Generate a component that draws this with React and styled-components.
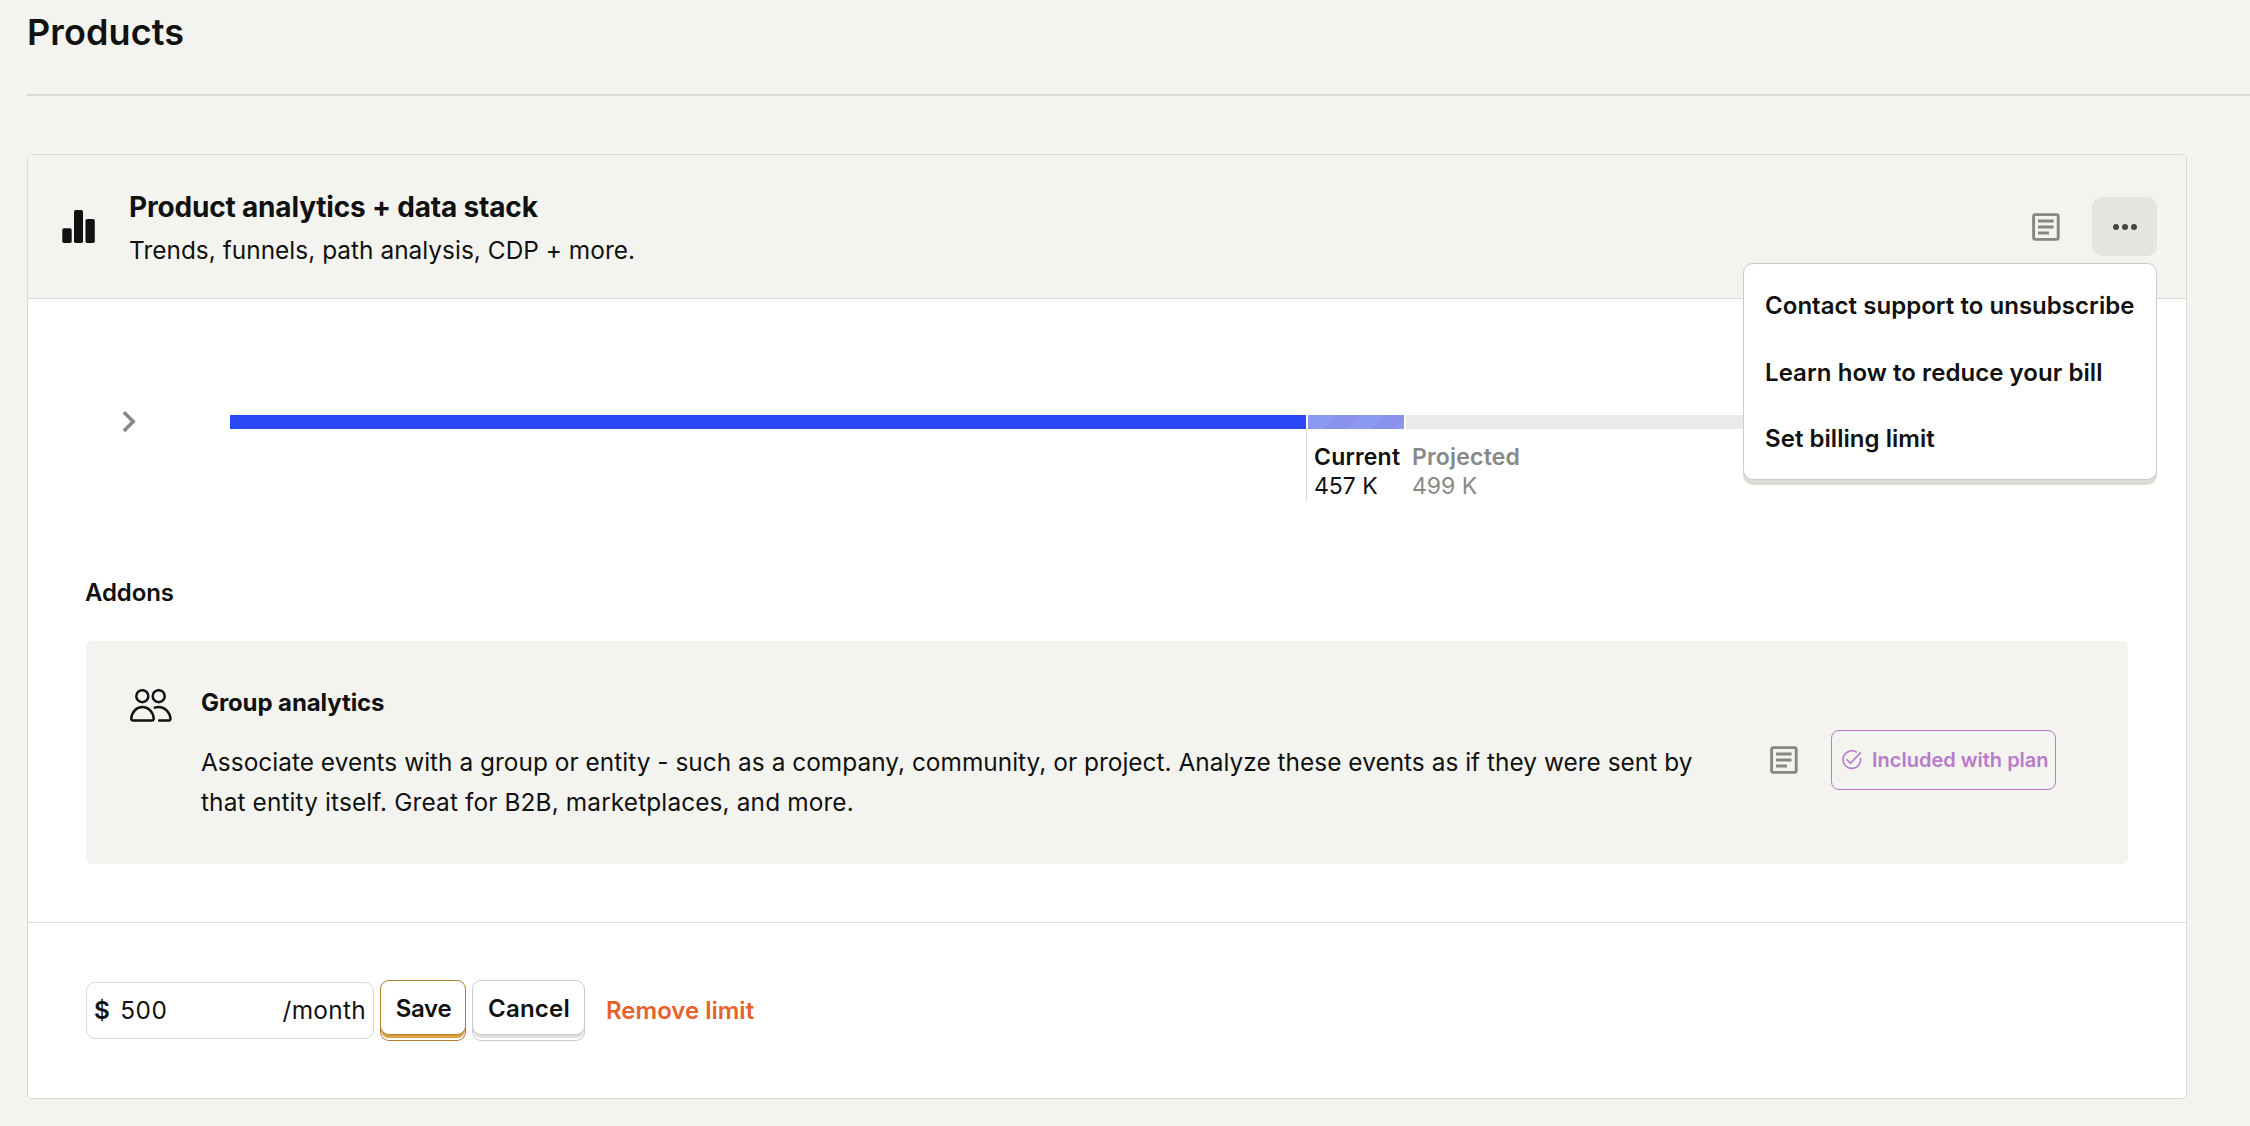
import React from "react";
import styled, { createGlobalStyle } from "styled-components";

const GlobalStyle = createGlobalStyle`
  *, *::before, *::after { box-sizing: border-box; }
  body {
    margin: 0;
    background: #f3f4ef;
    color: #111;
    font-family: Inter, "Liberation Sans", sans-serif;
    font-size: 24px;
    overflow: hidden;
  }
  h1, h2, h3, p { margin: 0; }
  button, input { font: inherit; color: inherit; }
  svg { display: block; flex-shrink: 0; }
`;

const Page = styled.main`
  height: 1126px;
  padding: 12px 0 0 27px;
`;

const PageTitle = styled.h1`
  font-size: 36px;
  line-height: 40px;
  font-weight: 600;
  letter-spacing: 0.1px;
`;

const Divider = styled.hr`
  height: 2px;
  margin: 42px 0 58px;
  border: 0;
  background: #dadbd2;
`;

const Card = styled.section`
  width: 2160px;
  border: 1px solid #dadbd2;
  border-radius: 5px;
  background: #fff;
`;

const CardHeader = styled.header`
  display: flex;
  align-items: center;
  height: 144px;
  padding: 0 29px 0 34px;
  border-bottom: 1px solid #dadbd2;
  background: #f3f4ef;
`;

const Heading = styled.div`
  display: flex;
  flex: 1;
  flex-direction: column;
  gap: 10px;
  margin-left: 34px;
  padding-top: 1px;
`;

const ProductTitle = styled.h2`
  font-size: 28px;
  line-height: 36px;
  font-weight: 700;
  letter-spacing: -0.18px;
`;

const ProductSummary = styled.p`
  font-size: 24.4px;
  line-height: 30px;
  letter-spacing: 0.03px;
`;

const MenuAnchor = styled.div`
  position: relative;
  margin-left: 32px;
`;

const MoreButton = styled.button`
  display: flex;
  align-items: center;
  justify-content: center;
  width: 65px;
  height: 59px;
  padding: 0;
  border: 0;
  border-radius: 10px;
  background: #e4e5df;
`;

const Menu = styled.div`
  position: absolute;
  z-index: 2;
  top: 66px;
  right: 0;
  width: 414px;
  padding: 9px 20px 6px 21px;
  border: 1px solid #cbcbcb;
  border-radius: 10px;
  background: #fff;
  box-shadow: 0 5px 0 #dadbd2;
`;

const MenuItem = styled.div`
  line-height: 66.5px;
  font-weight: 600;
  white-space: nowrap;
  letter-spacing: ${(p) => p.$tracking || 0}px;
`;

const CardBody = styled.div`
  padding: 112px 58px 58px;
`;

const Usage = styled.div`
  display: flex;
  align-items: flex-start;
  gap: 94px;
  padding-left: 36px;
`;

const Meter = styled.div`
  flex: 1;
  padding-top: 4px;
`;

const Track = styled.div`
  display: flex;
  gap: 2px;
  height: 14px;
`;

const Segment = styled.div`
  flex: ${(p) => (p.$width ? `0 0 ${p.$width}px` : "1")};
  background: ${(p) => p.$fill};
`;

const Figures = styled.div`
  display: grid;
  grid-template-columns: 98px auto;
  align-content: start;
  height: 72px;
  margin-left: 1076px;
  padding: 14px 0 0 7px;
  border-left: 1px solid #dadbd2;
`;

const Figure = styled.div`
  font-size: 23px;
  line-height: 29px;
  color: ${(p) => (p.$muted ? "#888" : "#111")};
  strong { display: block; font-weight: 600; letter-spacing: 0.2px; }
`;

const AddonsTitle = styled.h3`
  margin: 77px 0 33px -1px;
  font-size: 24px;
  line-height: 30px;
  font-weight: 600;
  letter-spacing: -0.1px;
`;

const Addon = styled.article`
  display: flex;
  align-items: flex-start;
  height: 223px;
  padding: 46px 72px 42px 44px;
  border-radius: 6px;
  background: #f3f4ef;
  > svg { margin-top: 2px; }
`;

const AddonText = styled.div`
  width: 1510px;
  margin-left: 29px;
  padding-top: 1px;
`;

const AddonTitle = styled.h3`
  margin-bottom: 24px;
  font-size: 24px;
  line-height: 30px;
  font-weight: 700;
  letter-spacing: -0.1px;
`;

const AddonDescription = styled.p`
  font-size: 24.4px;
  line-height: 40px;
  letter-spacing: 0.03px;
`;

const Closing = styled.span`
  letter-spacing: 0.13px;
`;

const AddonActions = styled.div`
  display: flex;
  align-items: center;
  gap: 33px;
  margin: 43px 0 0 auto;
`;

const Badge = styled.div`
  display: flex;
  align-items: center;
  gap: 10px;
  width: 225px;
  height: 60px;
  padding-left: 10px;
  border: 1px solid #b97bcb;
  border-radius: 8px;
  color: #b97bcb;
  font-size: 20px;
  font-weight: 600;
  white-space: nowrap;
`;

const CardFooter = styled.footer`
  display: flex;
  align-items: center;
  gap: 6px;
  height: 176px;
  padding: 0 58px;
  border-top: 1px solid #dadbd2;
`;

const LimitField = styled.label`
  display: flex;
  align-items: center;
  width: 288px;
  height: 57px;
  padding: 0 7px 1px 7px;
  border: 1px solid #dadbd2;
  border-radius: 9px;
  font-size: 24.4px;
  letter-spacing: 0.3px;
  strong { font-weight: 600; }
`;

const LimitInput = styled.input`
  flex: 1;
  min-width: 0;
  padding: 0 0 0 10px;
  border: 0;
  outline: 0;
  background: none;
  letter-spacing: 0.6px;
`;

const RaisedButton = styled.button`
  width: ${(p) => p.$width}px;
  height: 55px;
  margin-bottom: 6px;
  padding: 1px 0 0 1px;
  border: 1px solid ${(p) => p.$edge};
  border-radius: 9px;
  background: #fff;
  box-shadow:
    0 4px 0 -1px ${(p) => p.$depth},
    0 6px 0 -1px #fff,
    0 6px 0 0 ${(p) => p.$edge};
  font-weight: 600;
  letter-spacing: ${(p) => p.$tracking || 0}px;
`;

const LinkButton = styled.button`
  margin-left: 15px;
  padding: 0;
  border: 0;
  background: none;
  color: #e8602c;
  font-weight: 600;
`;

const BarsIcon = () => (
  <svg width="33" height="33" viewBox="0 0 33 33" fill="#111">
    <rect x="0.3" y="18.3" width="9.4" height="14.7" rx="1.8" />
    <rect x="12" y="0" width="9" height="33" rx="1.8" />
    <rect x="23.5" y="9" width="9.3" height="24" rx="1.8" />
  </svg>
);

const PlansIcon = () => (
  <svg width="28" height="28" viewBox="0 0 28 28" fill="none" stroke="#868682" strokeWidth="2.9">
    <rect x="1.6" y="1.6" width="24.6" height="24.8" rx="1.8" />
    <path d="M6 8h15.6M6 14h15.6M6 20h11" />
  </svg>
);

const DotsIcon = () => (
  <svg width="24" height="6" viewBox="0 0 24 6" fill="#444">
    <circle cx="3" cy="3" r="3" />
    <circle cx="12" cy="3" r="3" />
    <circle cx="21" cy="3" r="3" />
  </svg>
);

const ChevronIcon = () => (
  <svg width="14" height="22" viewBox="0 0 14 22" fill="none" stroke="#888" strokeWidth="3.5">
    <path d="M1.9 1.3L11.2 10.6L1.9 19.9" />
  </svg>
);

const PeopleIcon = () => (
  <svg width="42" height="33" viewBox="0 0 42 33" fill="none" stroke="#111" strokeWidth="2.5" strokeLinecap="round" strokeLinejoin="round">
    <circle cx="12.3" cy="7.2" r="6" />
    <circle cx="28.7" cy="7.2" r="6" />
    <path d="M1.3 29.6C1.7 22.9 6.4 18 12.4 18C18.4 18 23.3 22.9 23.7 29.6C23.8 30.7 23.1 31.5 22 31.5H2.9C1.8 31.5 1.2 30.7 1.3 29.6Z" />
    <path d="M24.8 18.7C26 18.2 27.4 18 28.7 18C34.7 18 39.9 22.9 40.5 29.6C40.6 30.7 39.9 31.5 38.8 31.5H29.2" />
  </svg>
);

const CheckCircleIcon = () => (
  <svg width="20" height="20" viewBox="0 0 20 20" fill="none" stroke="currentColor" strokeWidth="1.6">
    <path d="M14.8 2.3A8.8 8.8 0 1 0 18.5 8" />
    <path d="M4.5 9.3L8.5 13.3L18.8 2.4" />
  </svg>
);

const stripes =
  "repeating-linear-gradient(135deg, #8a9af1 0 21px, #8991ec 21px 38px, #8a9af1 38px 54.5px, #8991ec 54.5px 71px, #8a9af1 71px 88px)";

export default function App() {
  return (
    <>
      <GlobalStyle />
      <Page>
        <PageTitle>Products</PageTitle>
        <Divider />
        <Card>
          <CardHeader>
            <BarsIcon />
            <Heading>
              <ProductTitle>Product analytics + data stack</ProductTitle>
              <ProductSummary>Trends, funnels, path analysis, CDP + more.</ProductSummary>
            </Heading>
            <PlansIcon />
            <MenuAnchor>
              <MoreButton aria-label="More">
                <DotsIcon />
              </MoreButton>
              <Menu>
                <MenuItem $tracking={0.04}>Contact support to unsubscribe</MenuItem>
                <MenuItem $tracking={0.06}>Learn how to reduce your bill</MenuItem>
                <MenuItem $tracking={0.04}>Set billing limit</MenuItem>
              </Menu>
            </MenuAnchor>
          </CardHeader>

          <CardBody>
            <Usage>
              <ChevronIcon />
              <Meter>
                <Track>
                  <Segment $width={1076} $fill="#2b4af5" />
                  <Segment $width={96} $fill={stripes} />
                  <Segment $fill="#eaeaea" />
                </Track>
                <Figures>
                  <Figure>
                    <strong>Current</strong>457 K
                  </Figure>
                  <Figure $muted>
                    <strong>Projected</strong>499 K
                  </Figure>
                </Figures>
              </Meter>
            </Usage>

            <AddonsTitle>Addons</AddonsTitle>
            <Addon>
              <PeopleIcon />
              <AddonText>
                <AddonTitle>Group analytics</AddonTitle>
                <AddonDescription>
                  Associate events with a group or entity - such as a company, community, or project.
                  Analyze these events as if they were sent by{" "}
                  <Closing>that entity itself. Great for B2B, marketplaces, and more.</Closing>
                </AddonDescription>
              </AddonText>
              <AddonActions>
                <PlansIcon />
                <Badge>
                  <CheckCircleIcon />
                  Included with plan
                </Badge>
              </AddonActions>
            </Addon>
          </CardBody>

          <CardFooter>
            <LimitField>
              <strong>$</strong>
              <LimitInput defaultValue="500" />
              <span>/month</span>
            </LimitField>
            <RaisedButton $width={86} $edge="#b17d2c" $depth="#e0a044" $tracking={-0.3}>
              Save
            </RaisedButton>
            <RaisedButton $width={113} $edge="#cbcbcb" $depth="#dfdfdc" $tracking={0.2}>
              Cancel
            </RaisedButton>
            <LinkButton>Remove limit</LinkButton>
          </CardFooter>
        </Card>
      </Page>
    </>
  );
}
